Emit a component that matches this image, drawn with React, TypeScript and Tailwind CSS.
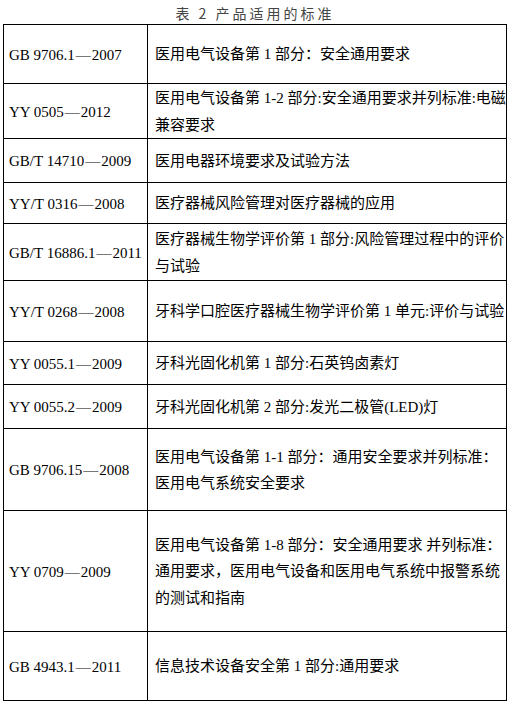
import React from 'react';

// Standards table rows: code, description lines, row height (px)
const rows: { code: string; lines: string[]; h: number }[] = [
  { code: 'GB 9706.1—2007', lines: ['医用电气设备第 1 部分：安全通用要求'], h: 59 },
  { code: 'YY 0505—2012', lines: ['医用电气设备第 1-2 部分:安全通用要求并列标准:电磁', '兼容要求'], h: 53 },
  { code: 'GB/T 14710—2009', lines: ['医用电器环境要求及试验方法'], h: 44 },
  { code: 'YY/T 0316—2008', lines: ['医疗器械风险管理对医疗器械的应用'], h: 41 },
  { code: 'GB/T 16886.1—2011', lines: ['医疗器械生物学评价第 1 部分:风险管理过程中的评价', '与试验'], h: 57 },
  { code: 'YY/T 0268—2008', lines: ['牙科学口腔医疗器械生物学评价第 1 单元:评价与试验'], h: 61 },
  { code: 'YY 0055.1—2009', lines: ['牙科光固化机第 1 部分:石英钨卤素灯'], h: 43 },
  { code: 'YY 0055.2—2009', lines: ['牙科光固化机第 2 部分:发光二极管(LED)灯'], h: 44 },
  { code: 'GB 9706.15—2008', lines: ['医用电气设备第 1-1 部分：通用安全要求并列标准：', '医用电气系统安全要求'], h: 82 },
  {
    code: 'YY 0709—2009',
    lines: ['医用电气设备第 1-8 部分：安全通用要求 并列标准：', '通用要求，医用电气设备和医用电气系统中报警系统', '的测试和指南'],
    h: 121,
  },
  { code: 'GB 4943.1—2011', lines: ['信息技术设备安全第 1 部分:通用要求'], h: 69 },
];

// split the code on the dash so the dash gets a little air on each side
function Code({ code }: { code: string }) {
  const [a, b] = code.split('—');
  return (
    <>
      {a}
      <span className="px-[1px]">—</span>
      {b}
    </>
  );
}

export default function App() {
  return (
    <div className="w-[510px] h-[703px] bg-white text-black font-['Liberation_Serif','Noto_Sans_CJK_SC',serif]">
      <div className="h-[24px] flex items-center justify-center pt-[1px] text-[14px] tracking-[3px] text-[#444] font-['Noto_Sans_CJK_SC',sans-serif] leading-none">
        表 2 产品适用的标准
      </div>
      <table className="ml-[3px] w-[504px] border-collapse table-fixed">
        <colgroup>
          <col className="w-[144px]" />
          <col />
        </colgroup>
        <tbody>
          {rows.map((r) => (
            <tr key={r.code} style={{ height: r.h }}>
              <td className="border border-black pl-[5px] pt-[2px] align-middle text-[15px] leading-none whitespace-nowrap">
                <Code code={r.code} />
              </td>
              <td className="border border-black pl-[7px] pr-1 pt-[1px] align-middle text-[15px] leading-[26.5px]">
                {r.lines.map((l, i) => (
                  <div key={i} className="whitespace-nowrap">
                    {l}
                  </div>
                ))}
              </td>
            </tr>
          ))}
        </tbody>
      </table>
    </div>
  );
}
